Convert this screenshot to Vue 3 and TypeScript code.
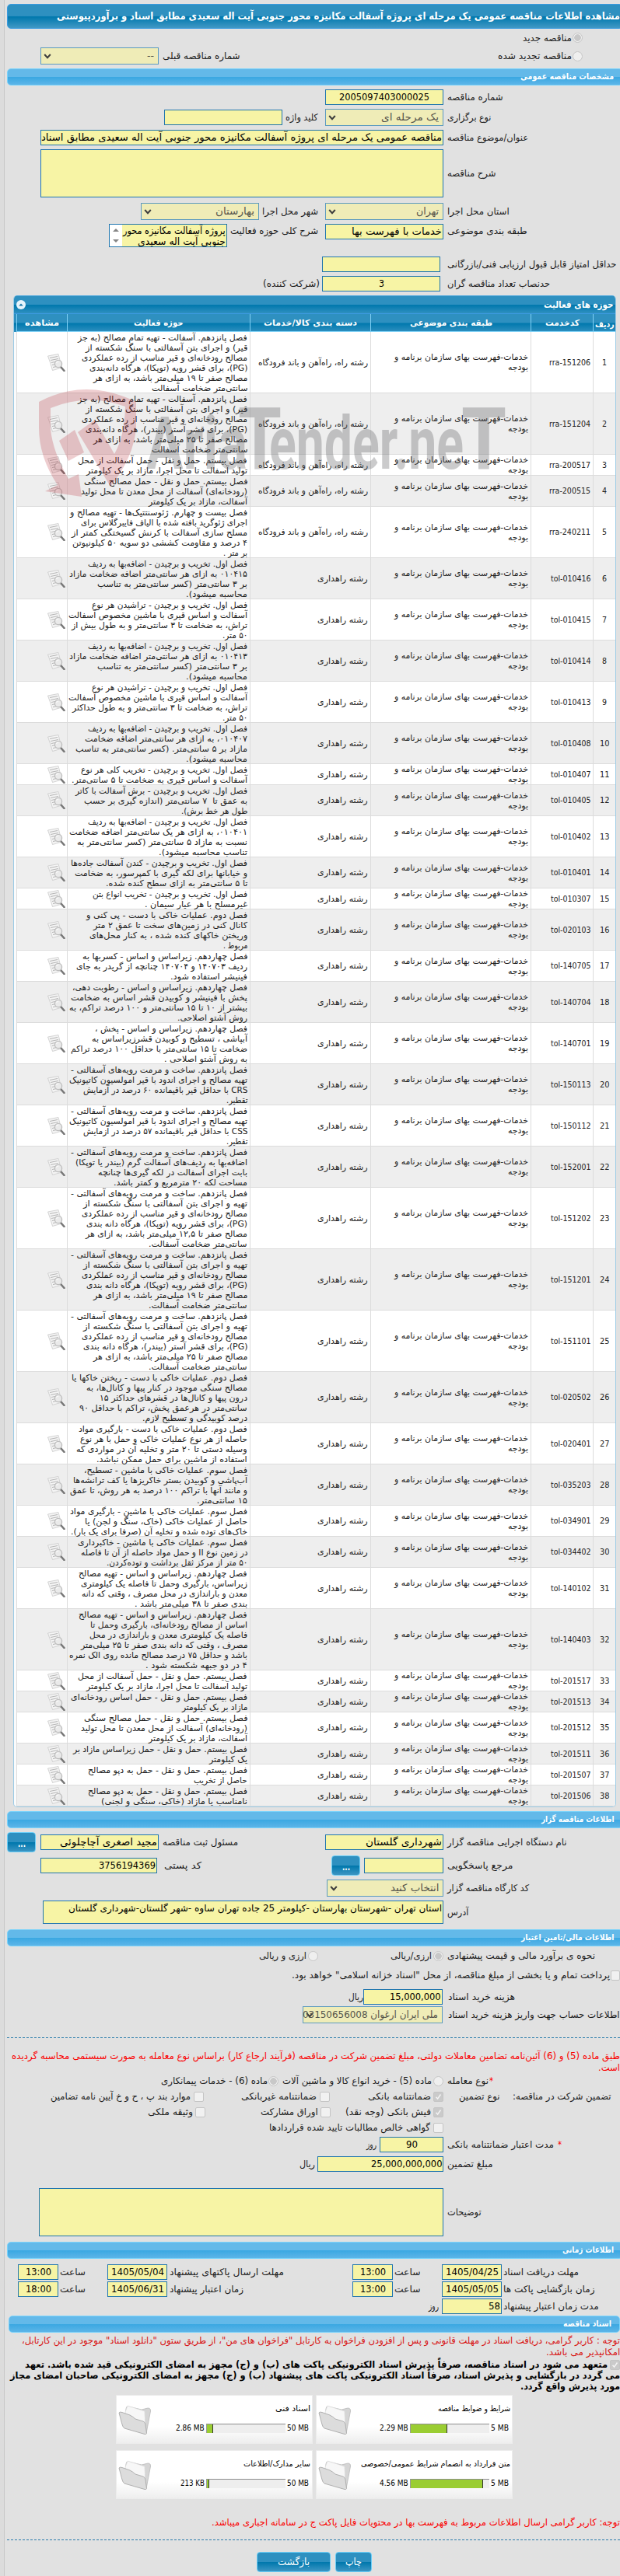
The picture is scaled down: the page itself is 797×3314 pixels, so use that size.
<script setup lang="ts">
type Kind = 'label' | 'input' | 'select' | 'area' | 'scroll' | 'radio' | 'radioOn' | 'check' | 'checkOn' | 'btn' | 'star'
type Align = 'start' | 'center'
interface Item { kind: Kind; gap: number; w: number; lines: [string, number][]; align: Align }
interface Row { mt: number; h: number; top: boolean; items: Item[] }
type Raw = [Kind, number, number, string?, number?, Align?]

// Squeezes a line of text horizontally so that it takes exactly the given width.
const vFit = {
  mounted(el: HTMLElement, binding: { value: number }) {
    el.style.width = 'auto'
    const natural = el.getBoundingClientRect().width
    el.style.width = binding.value + 'px'
    if (natural > 0) el.style.transform = `scaleX(${binding.value / natural})`
  },
}

const PAGE = 797

// Each raw item is [kind, right edge, width, text, text width, alignment], listed from right to left.
function row(mt: number, h: number, raws: Raw[], top = false): Row {
  let edge = PAGE
  const items = raws.map(([kind, right, w, text, tw, align]): Item => {
    const gap = edge - right
    edge = right - w
    return { kind, gap, w, lines: text ? [[text, tw ?? w]] : [], align: align ?? 'start' }
  })
  return { mt, h, top, items }
}

const typeRows: Row[] = [
  row(5, 13, [['radioOn', 749, 13], ['label', 734.6, 63, 'مناقصه جدید']]),
  row(6, 22, [['radio', 749, 13], ['label', 734.6, 95, 'مناقصه تجدید شده'], ['label', 308.6, 99.6, 'شماره مناقصه قبلی'], ['select', 204, 152, '--', 9]]),
]

const summaryRow = row(5, 30, [
  ['label', 677.7, 102.7, 'طبقه بندی موضوعی'],
  ['input', 570, 152, 'خدمات با فهرست بها', 116],
  ['label', 408.7, 113, 'شرح کلی حوزه فعالیت'],
  ['scroll', 292, 152],
], true)
summaryRow.items[3].lines = [['پروژه آسفالت مکانیزه محور', 131.7], ['جنوبی آیت اله سعیدی', 113]]

const generalRows: Row[] = [
  row(5, 20, [['label', 646.7, 71.7, 'شماره مناقصه'], ['input', 570, 152, '2005097403000025', 116, 'center']]),
  row(5, 22, [['label', 631.4, 56.4, 'نوع برگزاری'], ['select', 570, 152, 'یک مرحله ای', 74], ['label', 408.7, 41.7, 'کلید واژه'], ['input', 363, 152]]),
  row(5, 20, [['label', 679, 104, 'عنوان/موضوع مناقصه'], ['input', 570, 518, 'مناقصه عمومی یک مرحله ای پروژه آسفالت مکانیزه محور جنوبی آیت اله سعیدی مطابق اسناد', 515]]),
  row(5, 62, [['label', 637.5, 62.5, 'شرح مناقصه'], ['area', 570, 518]]),
  row(7, 22, [['label', 654.8, 79.8, 'استان محل اجرا'], ['select', 570, 152, 'تهران', 29], ['label', 408.7, 72, 'شهر محل اجرا'], ['select', 333, 152, 'بهارستان', 50]]),
  summaryRow,
  row(12, 20, [['label', 792.6, 217.6, 'حداقل امتیاز قابل قبول ارزیابی فنی/بازرگانی'], ['input', 566, 152]]),
  row(5, 20, [['label', 707, 132, 'حدنصاب تعداد مناقصه گران'], ['input', 566, 152, '3', 7, 'center'], ['label', 410.8, 73, '(شرکت کننده)']]),
]

const ownerRows: Row[] = [
  row(5, 26, [['label', 728.5, 153.5, 'نام دستگاه اجرایی مناقصه گزار'], ['input', 570, 152, 'شهرداری گلستان', 98], ['label', 306, 97, 'مسئول ثبت مناقصه'], ['input', 204, 152, 'مجید اصغری آچاچلوئی', 125], ['btn', 46, 37, '...', 10]]),
  row(4, 26, [['label', 659.4, 84.4, 'مرجع پاسخگویی'], ['input', 570, 102], ['btn', 463, 37, '...', 10], ['label', 258.8, 48, 'کد پستی'], ['input', 202, 150, '3756194369', 73]]),
  row(5, 22, [['label', 680, 105, 'کد کارگاه مناقصه گزار'], ['select', 570, 150, 'انتخاب کنید', 62.5]]),
  row(5, 30, [['label', 602.4, 27.4, 'آدرس'], ['area', 570, 515, 'استان تهران -شهرستان بهارستان -کیلومتر 25 جاده تهران ساوه -شهر گلستان-شهرداری گلستان', 480]]),
]

const financeRows: Row[] = [
  row(4, 16, [['label', 765, 190, 'نحوه ی برآورد مالی و قیمت پیشنهادی'], ['radioOn', 570, 13], ['label', 555, 53, 'ارزی/ریالی'], ['radio', 408.5, 13], ['label', 394, 61, 'ارزی و ریالی']]),
  row(9, 16, [['check', 797, 12.5], ['label', 784, 409, 'پرداخت تمام و یا بخشی از مبلغ مناقصه، از محل "اسناد خزانه اسلامی" خواهد بود.']]),
  row(10, 20, [['label', 662.4, 86, 'هزینه خرید اسناد'], ['input', 569, 102, '15,000,000', 65.6], ['label', 467, 19, 'ریال']]),
  row(2, 22, [['label', 797, 220.6, 'اطلاعات حساب جهت واریز هزینه خرید اسناد'], ['select', 569, 180, 'ملی ایران ارغوان 03150656008', 174]]),
]

const guaranteeRows: Row[] = [
  row(1, 16, [['star', 634, 5, '*'], ['label', 628, 53, 'نوع معامله'], ['radio', 570, 13], ['label', 555, 192, 'ماده (5) - خرید انواع کالا و ماشین آلات'], ['radioOn', 358, 13], ['label', 343.7, 137, 'ماده (6) - خدمات پیمانکاری']]),
  row(2, 20, [['label', 785.5, 126.5, 'تضمین شرکت در مناقصه:'], ['label', 642.6, 52.4, 'نوع تضمین'], ['checkOn', 570, 13], ['label', 553.6, 81, 'ضمانتنامه بانکی'], ['check', 424, 13], ['label', 407, 97, 'ضمانتنامه غیربانکی'], ['check', 262, 13], ['label', 244.5, 180, 'موارد بند پ ، ح و خ آیین نامه تضامین']]),
  row(0, 20, [['checkOn', 570, 13], ['label', 553.6, 110, 'فیش بانکی (وجه نقد)'], ['check', 425, 13], ['label', 408.7, 73.7, 'اوراق مشارکت'], ['check', 264, 13], ['label', 247.6, 58, 'وثیقه ملکی']]),
  row(0, 20, [['check', 570, 13], ['label', 552.6, 207, 'گواهی خالص مطالبات تایید شده قراردادها']]),
  row(2, 20, [['star', 722, 5, '*'], ['label', 712, 137, 'مدت اعتبار ضمانتنامه بانکی'], ['input', 570, 82, '90', 15, 'center'], ['label', 484, 13, 'روز']]),
  row(5, 20, [['label', 633.5, 58.5, 'مبلغ تضمین'], ['input', 570, 162, '25,000,000,000', 91.5], ['label', 404.7, 20, 'ریال']]),
  row(21, 62, [['label', 618.7, 43.7, 'توضیحات'], ['area', 570, 520]]),
]

const timeRows: Row[] = [
  row(7, 20, [['label', 744, 97, 'مهلت دریافت اسناد'], ['input', 645, 77, '1405/04/25', 68, 'center'], ['label', 540.5, 33.5, 'ساعت'], ['input', 505, 52, '13:00', 33, 'center'], ['label', 364.5, 147, 'مهلت ارسال پاکتهای پیشنهاد'], ['input', 215, 77, '1405/05/04', 68, 'center'], ['label', 110, 33, 'ساعت'], ['input', 75, 52, '13:00', 33, 'center']]),
  row(2, 20, [['label', 764.6, 117.6, 'زمان بازگشایی پاکت ها'], ['input', 645, 77, '1405/05/05', 68, 'center'], ['label', 540.5, 33.5, 'ساعت'], ['input', 505, 52, '13:00', 33, 'center'], ['label', 312.7, 95, 'زمان اعتبار پیشنهاد'], ['input', 215, 77, '1405/06/31', 68, 'center'], ['label', 110, 33, 'ساعت'], ['input', 75, 52, '18:00', 33, 'center']]),
  row(2, 20, [['label', 769.7, 122.7, 'مدت زمان اعتبار پیشنهاد'], ['input', 645, 77, '58', 15], ['label', 564.3, 13, 'روز']]),
]

interface Block { title: string; w: number; mt: number; rows: Row[]; note?: boolean }
const lowerBlocks: Block[] = [
  { title: 'اطلاعات مناقصه گزار', w: 93.5, mt: 5, rows: ownerRows },
  { title: 'اطلاعات مالی/تامین اعتبار', w: 119.5, mt: 7, rows: financeRows, note: true },
  { title: 'اطلاعات زمانی', w: 66, mt: 7, rows: timeRows },
]

type Line = [string, number]
const ASF1: Line = ['فصل پانزدهم. آسفالت - تهیه تمام مصالح (به جز', 217.6]
const PAVE: Line = ['فصل پانزدهم. ساخت و مرمت رویه‌های آسفالتی -', 227]
const ADD: Line = ['فصل اول. تخریب و برچیدن - اضافه‌بها به ردیف', 205]
const ROADMIX: Line[] = [['تهیه و اجرای بتن آسفالتی با سنگ شکسته از', 211], ['مصالح رودخانه‌ای و قیر مناسب از رده عملکردی', 213]]
const MIX: Line[] = [['قیر) و اجرای بتن آسفالتی با سنگ شکسته از', 208.4], ['مصالح رودخانه‌ای و قیر مناسب از رده عملکردی', 213]]
const SHAVE: Line[] = [['فصل اول. تخریب و برچیدن - تراشیدن هر نوع', 200], ['آسفالت و اساس قیری با ماشین مخصوص آسفالت', 230]]
const RATIO: Line[] = [['بر ۳ سانتی‌متر (کسر سانتی‌متر به تناسب', 193], ['محاسبه میشود).', 79]]
const HAUL: Line[] = [['فصل بیستم. حمل و نقل - حمل آسفالت از محل', 217.6], ['تولید آسفالت تا محل اجرا، مازاد بر یک کیلومتر', 207]]
const STONE: Line[] = [['فصل بیستم. حمل و نقل - حمل مصالح سنگی', 210.5], ['(رودخانه‌ای) آسفالت از محل معدن تا محل تولید', 214], ['آسفالت، مازاد بر یک کیلومتر', 127]]

const activities: { code: string; lines: Line[] }[] = [
  { code: 'rra-151206', lines: [ASF1, ...MIX, ['(PG)، برای قشر رویه (توپکا)، هرگاه دانه‌بندی', 203.4], ['مصالح صفر تا ۱۹ میلی‌متر باشد، به ازای هر', 198.3], ['سانتی‌متر ضخامت آسفالت', 123.5]] },
  { code: 'rra-151204', lines: [ASF1, ...MIX, ['(PG)، برای قشر آستر (بیندر)، هرگاه دانه‌بندی', 208], ['مصالح صفر تا ۲۵ میلی‌متر باشد، به ازای هر', 198.3], ['سانتی‌متر ضخامت آسفالت', 123.5]] },
  { code: 'rra-200517', lines: HAUL },
  { code: 'rra-200515', lines: STONE },
  { code: 'rra-240211', lines: [['فصل بیست و چهارم. ژئوسنتتیک‌ها - تهیه مصالح و', 228], ['اجرای ژئوگرید بافته شده با الیاف فایبرگلاس برای', 214], ['مسلح سازی آسفالت با کرنش گسیختگی کمتر از', 226], ['۴ درصد و مقاومت کششی دو سویه ۵۰ کیلونیوتن', 225], ['بر متر .', 31]] },
  { code: 'tol-010416', lines: [ADD, ['۰۱۰۴۱۵ به ازای هر سانتی‌متر اضافه ضخامت مازاد', 229], ...RATIO] },
  { code: 'tol-010415', lines: [...SHAVE, ['تراش، به ضخامت تا ۳ سانتی‌متر و به طول بیش از', 226], ['۵۰ متر.', 32.5]] },
  { code: 'tol-010414', lines: [ADD, ['۰۱۰۴۱۳ به ازای هر سانتی‌متر اضافه ضخامت مازاد', 229], ...RATIO] },
  { code: 'tol-010413', lines: [...SHAVE, ['تراش، به ضخامت تا ۳ سانتی‌متر و به طول حداکثر', 225], ['۵۰ متر.', 32.5]] },
  { code: 'tol-010408', lines: [ADD, ['۰۱۰۴۰۷، به ازای هر سانتی‌متر اضافه ضخامت', 209], ['مازاد بر ۵ سانتی‌متر. (کسر سانتی‌متر به تناسب', 221], ['محاسبه میشود).', 79]] },
  { code: 'tol-010407', lines: [['فصل اول. تخریب و برچیدن - تخریب کلی هر نوع', 214], ['آسفالت و اساس قیری به ضخامت تا ۵ سانتی‌متر.', 226]] },
  { code: 'tol-010405', lines: [['فصل اول. تخریب و برچیدن - برش آسفالت با کاتر', 221], ['به عمق تا  ۷ سانتی‌متر (اندازه گیری بر حسب', 210], ['طول هر خط برش).', 85.4]] },
  { code: 'tol-010402', lines: [ADD, ['۰۱۰۴۰۱، به ازای هر یک سانتی‌متر اضافه ضخامت', 229], ['نسبت به مازاد ۵ سانتی‌متر (کسر سانتی‌متر به', 219], ['تناسب محاسبه میشود).', 114]] },
  { code: 'tol-010401', lines: [['فصل اول. تخریب و برچیدن - کندن آسفالت جاده‌ها', 227], ['و خیابانها برای لکه گیری با کمپرسور، به ضخامت', 222], ['تا ۵ سانتی‌متر به ازای سطح کنده شده.', 182.5]] },
  { code: 'tol-010307', lines: [['فصل اول. تخریب و برچیدن - تخریب انواع بتن', 199], ['غیرمسلح با هر عیار سیمان .', 132]] },
  { code: 'tol-020103', lines: [['فصل دوم. عملیات خاکی با دست - پی کنی و', 207], ['کانال کنی در زمین‌های سخت تا عمق ۲ متر', 198], ['وریختن خاکهای کنده شده ، به کنار محل‌های', 203.4], ['مربوط .', 31.5]] },
  { code: 'tol-140705', lines: [['فصل چهاردهم. زیراساس و اساس - کسربها به', 212.5], ['ردیف ۱۴۰۷۰۳ و ۱۴۰۷۰۴ چنانچه از گریدر به جای', 220], ['فینیشر استفاده شود.', 99]] },
  { code: 'tol-140704', lines: [['فصل چهاردهم. زیراساس و اساس - رطوبت دهی،', 225], ['پخش با فینیشر و کوبیدن قشر اساس به ضخامت', 227], ['بیشتر از ۱۰ تا ۱۵ سانتی‌متر و ۱۰۰ درصد تراکم، به', 229], ['روش آشتو اصلاحی.', 90]] },
  { code: 'tol-140701', lines: [['فصل چهاردهم. زیراساس و اساس - پخش ،', 196], ['آبپاشی ، تسطیح و کوبیدن قشرزیراساس به', 200], ['ضخامت تا ۱۵ سانتی‌متر با حداقل ۱۰۰ درصد تراکم', 227], ['به روش آشتو اصلاحی .', 107]] },
  { code: 'tol-150113', lines: [PAVE, ['تهیه مصالح و اجرای اندود با قیر امولسیون کاتیونیک', 229], ['CRS با حداقل قیر باقیمانده ۶۰ درصد در آزمایش', 211.5], ['تقطیر.', 27.5]] },
  { code: 'tol-150112', lines: [PAVE, ['تهیه مصالح و اجرای اندود با قیر امولسیون کاتیونیک', 229], ['CSS با حداقل قیر باقیمانده ۵۷ درصد در آزمایش', 211.5], ['تقطیر.', 27.5]] },
  { code: 'tol-152001', lines: [PAVE, ['اضافه‌بها به ردیف‌های آسفالت گرم (بیندر یا توپکا)', 221], ['بابت اجرای آسفالت در لکه گیری‌ها چنانچه', 192], ['مساحت لکه ۲۰ مترمربع و کمتر باشد.', 172]] },
  { code: 'tol-151202', lines: [PAVE, ...ROADMIX, ['(PG)، برای قشر رویه (توپکا)، هرگاه دانه بندی', 207], ['مصالح صفر تا ۱۲,۵ میلی‌متر باشد، به ازای هر', 208], ['سانتی‌متر ضخامت آسفالت.', 126.6]] },
  { code: 'tol-151201', lines: [PAVE, ...ROADMIX, ['(PG)، برای قشر رویه (توپکا)، هرگاه دانه بندی', 207], ['مصالح صفر تا ۱۹ میلی‌متر باشد، به ازای هر', 198.3], ['سانتی‌متر ضخامت آسفالت.', 126.6]] },
  { code: 'tol-151101', lines: [PAVE, ...ROADMIX, ['(PG)، برای قشر آستر (بیندر)، هرگاه دانه بندی', 211.5], ['مصالح صفر تا ۲۵ میلی‌متر باشد، به ازای هر', 198.3], ['سانتی‌متر ضخامت آسفالت.', 126.6]] },
  { code: 'tol-020502', lines: [['فصل دوم. عملیات خاکی با دست - ریختن خاکها یا', 226], ['مصالح سنگی موجود در کنار پیها و کانال‌ها، به', 207], ['درون پیها و کانال‌ها در قشرهای حداکثر ۱۵', 190], ['سانتی‌متر در هرعمق پخش، تراکم با حداقل ۹۰', 215.6], ['درصد کوبیدگی و تسطیح لازم.', 135]] },
  { code: 'tol-020401', lines: [['فصل دوم. عملیات خاکی با دست - بارگیری مواد', 216.6], ['حاصله از هر نوع عملیات خاکی و حمل با هر نوع', 215], ['وسیله دستی تا ۲۰ متر و تخلیه آن در مواردی که', 219.6], ['استفاده از ماشین برای حمل ممکن نباشد.', 193.7]] },
  { code: 'tol-035203', lines: [['فصل سوم. عملیات خاکی با ماشین - تسطیح،', 210], ['آب‌پاشی و کوبیدن بستر خاکریزها یا کف ترانشه‌ها', 224], ['و مانند آنها با تراکم ۱۰۰ درصد به هر روش، تا عمق', 228], ['۱۵ سانتی‌متر.', 65]] },
  { code: 'tol-034901', lines: [['فصل سوم. عملیات خاکی با ماشین - بارگیری مواد', 228], ['حاصل از عملیات خاکی (خاک، سنگ و لجن) یا', 209], ['خاک‌های توده شده و تخلیه آن (صرفا برای یک بار).', 227]] },
  { code: 'tol-034402', lines: [['فصل سوم. عملیات خاکی با ماشین - خاکبرداری', 218], ['در زمین نوع II و حمل مواد حاصله از آن تا فاصله', 214.5], ['۵۰ متر از مرکز ثقل برداشت و توده‌کردن.', 181.5]] },
  { code: 'tol-140102', lines: [['فصل چهاردهم. زیراساس و اساس - تهیه مصالح', 216.6], ['زیراساس، بارگیری وحمل تا فاصله یک کیلومتری', 214], ['معدن و باراندازی در محل مصرف ، وقتی که دانه', 213], ['بندی صفر تا ۳۸ میلی‌متر باشد .', 145]] },
  { code: 'tol-140403', lines: [['فصل چهاردهم. زیراساس و اساس - تهیه مصالح', 216.6], ['اساس از مصالح رودخانه‌ای، بارگیری وحمل تا', 202], ['فاصله یک کیلومتری معدن و باراندازی در محل', 203], ['مصرف ، وقتی که دانه بندی صفر تا ۲۵ میلی‌متر', 214.5], ['باشد و حداقل ۷۵ درصد مصالح مانده روی الک نمره', 229], ['۴ در دو جبهه شکسته شود .', 130.7]] },
  { code: 'tol-201517', lines: HAUL },
  { code: 'tol-201513', lines: [['فصل بیستم. حمل و نقل - حمل اساس رودخانه‌ای', 227], ['مازاد بر یک کیلومتر', 84.4]] },
  { code: 'tol-201512', lines: STONE },
  { code: 'tol-201511', lines: [['فصل بیستم. حمل و نقل - حمل زیراساس مازاد بر', 224], ['یک کیلومتر', 49]] },
  { code: 'tol-201507', lines: [['فصل بیستم. حمل و نقل - حمل به دپو مصالح', 205], ['حاصل از تخریب', 68.6]] },
  { code: 'tol-201506', lines: [['فصل بیستم. حمل و نقل - حمل به دپو مصالح', 205], ['نامناسب یا مازاد (خاکی، سنگی و لجنی)', 188]] },
]

const heads: Line[] = [['ردیف', 24.5], ['کدخدمت', 44], ['طبقه بندی موضوعی', 106], ['دسته بندی کالا/خدمات', 120], ['حوزه فعالیت', 63.5], ['مشاهده', 44]]

const docs = [
  { title: 'شرایط و ضوابط مناقصه', w: 93, max: '5 MB', mw: 23, used: '2.29 MB', uw: 36.6, pct: 46.5 },
  { title: 'اسناد فنی', w: 45, max: '50 MB', mw: 28, used: '2.86 MB', uw: 36.6, pct: 7.5 },
  { title: 'متن قرارداد به انضمام شرایط عمومی/خصوصی', w: 192, max: '5 MB', mw: 23, used: '4.56 MB', uw: 36.6, pct: 92.5 },
  { title: 'سایر مدارک/اطلاعات', w: 86, max: '50 MB', mw: 28, used: '213 KB', uw: 31, pct: 2.5 },
]

const blocksBefore: Block[] = [{ title: 'مشخصات مناقصه عمومی', w: 120, mt: 5, rows: generalRows }]
const stages: { id: string; blocks: Block[] }[] = [
  { id: 'general', blocks: blocksBefore },
  { id: 'lower', blocks: lowerBlocks },
]
const guaranteeBlock = guaranteeRows

function rowsOf(b: Block): Row[] {
  return b.rows
}
</script>

<template>
  <div class="page">
    <h1 class="title"><span v-fit="724" class="fit">مشاهده اطلاعات مناقصه عمومی یک مرحله ای پروژه آسفالت مکانیزه محور جنوبی آیت اله سعیدی مطابق اسناد و برآوردپیوستی</span></h1>

    <div v-for="(r, i) in typeRows" :key="'t' + i" class="row" :style="{ marginTop: r.mt + 'px', height: r.h + 'px' }">
      <div v-for="(it, j) in r.items" :key="j" :class="['item', it.kind, it.align]" :style="{ marginRight: it.gap + 'px', width: it.w + 'px' }">
        <svg v-if="it.kind === 'select'" class="chev" viewBox="0 0 10 7"><path d="M1.2 1 5 5.2 8.8 1" /></svg>
        <span v-for="l in it.lines" :key="l[0]" v-fit="l[1]" class="fit">{{ l[0] }}</span>
      </div>
    </div>

    <template v-for="stage in stages" :key="stage.id">
      <template v-for="b in stage.blocks" :key="b.title">
        <h2 class="section" :style="{ marginTop: b.mt + 'px' }"><span v-fit="b.w" class="fit">{{ b.title }}</span></h2>
        <div v-for="(r, i) in rowsOf(b)" :key="i" :class="['row', { top: r.top }]" :style="{ marginTop: r.mt + 'px', height: r.h + 'px' }">
          <div v-for="(it, j) in r.items" :key="j" :class="['item', it.kind, it.align]" :style="{ marginRight: it.gap + 'px', width: it.w + 'px' }">
            <svg v-if="it.kind === 'select'" class="chev" viewBox="0 0 10 7"><path d="M1.2 1 5 5.2 8.8 1" /></svg>
            <span v-for="l in it.lines" :key="l[0]" v-fit="l[1]" class="fit">{{ l[0] }}</span>
            <svg v-if="it.kind === 'scroll'" class="bar" viewBox="0 0 16 28"><rect width="16" height="28" fill="#fff" /><path d="M4 9 8 5l4 4zM4 19l4 4 4-4z" fill="#858585" /></svg>
          </div>
        </div>

        <template v-if="b.note">
          <div class="dash far"></div>
          <p class="notice red">
            <span v-fit="782" class="fit">طبق ماده (5) و (6) آئین‌نامه تضامین معاملات دولتی، مبلغ تضمین شرکت در مناقصه (فرآیند ارجاع کار) براساس نوع معامله به صورت سیستمی محاسبه گردیده</span>
            <span v-fit="28" class="fit">است.</span>
          </p>
          <div v-for="(r, i) in guaranteeBlock" :key="'g' + i" class="row" :style="{ marginTop: r.mt + 'px', height: r.h + 'px' }">
            <div v-for="(it, j) in r.items" :key="j" :class="['item', it.kind, it.align]" :style="{ marginRight: it.gap + 'px', width: it.w + 'px' }">
              <svg v-if="it.kind === 'checkOn'" class="tick" viewBox="0 0 13 13"><path d="M3 6.8 5.4 9.6 10 3" /></svg>
              <span v-for="l in it.lines" :key="l[0]" v-fit="l[1]" class="fit">{{ l[0] }}</span>
            </div>
          </div>
        </template>
      </template>

      <div v-if="stage.id === 'general'" class="table">
        <div class="table-title">
          <span v-fit="89.5" class="fit">حوزه های فعالیت</span>
          <svg class="toggle" viewBox="0 0 12 12"><circle cx="6" cy="6" r="6" fill="#e6f4fc" /><path d="M3.2 7.6 6 4.6l2.8 3z" fill="#1676a8" /></svg>
        </div>
        <div class="tr head">
          <div v-for="h in heads" :key="h[0]" class="th"><span v-fit="h[1]" class="fit">{{ h[0] }}</span></div>
        </div>
        <div v-for="(a, i) in activities" :key="a.code" class="tr">
          <div class="td num"><span v-fit="i < 9 ? 6 : 12.5" class="fit">{{ i + 1 }}</span></div>
          <div class="td"><span v-fit="i < 5 ? 53 : 51.5" class="fit">{{ a.code }}</span></div>
          <div class="td"><span v-fit="172" class="fit">خدمات-فهرست بهای سازمان برنامه و</span><span v-fit="26" class="fit">بودجه</span></div>
          <div class="td"><span v-if="i < 5" v-fit="141" class="fit">رشته راه، راه‌آهن و باند فرودگاه</span><span v-else v-fit="64.6" class="fit">رشته راهداری</span></div>
          <div class="td"><span v-for="(l, k) in a.lines" :key="k" v-fit="l[1]" class="fit">{{ l[0] }}</span></div>
          <div class="td view">
            <svg class="lens" viewBox="0 0 23 23">
              <path d="M.5 3 14 .5 18.500 18 6.500 21.500Q4 12 .5 3Z" fill="#f4f4f4" stroke="#c9c9c9" stroke-width=".8" />
              <path d="M3 5.500 13 3.500M4 8.500 14 6.500M5 11.500l6-1.200M6 14.500l4-.8M7 17.500l4-.8" stroke="#b4b4b4" stroke-width="1" />
              <path d="m17.500 17.500 4 4.500" stroke="#777" stroke-width="2.600" stroke-linecap="round" />
              <circle cx="14" cy="13" r="4.600" fill="#e9e9e9" fill-opacity=".9" stroke="#bdbdbd" stroke-width="1.300" />
              <path d="M11.500 12q.8-2 2.800-2" stroke="#fff" fill="none" />
            </svg>
          </div>
        </div>
        <svg class="watermark" viewBox="0 0 610 145">
          <g fill="#b71f2b" opacity=".22">
            <path d="M0 17Q60-15 125 17V50Q122 88 92 126L50 56 72 40 97 84Q110 62 111 23Q63 5 15 25V52Q18 82 38 116L51 110 55 139 8 132 24 124Q0 88 0 50Z" />
            <path d="M26 67 46 53 58 82 38 93Z" />
          </g>
          <g fill="#55565a" opacity=".3">
            <text x="138" y="103" font-size="95" textLength="130" lengthAdjust="spacingAndGlyphs">Aria</text>
            <text x="256" y="103" font-size="112" textLength="56" lengthAdjust="spacingAndGlyphs">T</text>
            <text x="296" y="103" font-size="95" textLength="250" lengthAdjust="spacingAndGlyphs">ender.ne</text>
            <text x="543" y="103" font-size="112" textLength="58" lengthAdjust="spacingAndGlyphs">T</text>
          </g>
        </svg>
      </div>
    </template>

    <h2 class="section docs-head"><span v-fit="62" class="fit">اسناد مناقصه</span></h2>
    <p class="notice dark">
      <span v-fit="769" class="fit">توجه : کاربر گرامی، دریافت اسناد در مهلت قانونی و پس از افزودن فراخوان به کارتابل "فراخوان های من"، از طریق ستون "دانلود اسناد" موجود در این کارتابل،</span>
      <span v-fit="95.5" class="fit">امکانپذیر می باشد.</span>
    </p>
    <div class="pledge">
      <div class="first">
        <div class="item checkOn"><svg class="tick" viewBox="0 0 13 13"><path d="M3 6.800 5.400 9.600 10 3" /></svg></div>
        <span v-fit="749" class="fit">متعهد می شود در اسناد مناقصه، صرفاً پذیرش اسناد الکترونیکی پاکت های (ب) و (ج) مجهز به امضای الکترونیکی قید شده باشد. تعهد</span>
      </div>
      <span v-fit="784" class="fit">می گردد در بازگشایی و پذیرش اسناد، صرفاً اسناد الکترونیکی پاکت های پیشنهاد (ب) و (ج) مجهز به امضای الکترونیکی صاحبان امضای مجاز</span>
      <span v-fit="128" class="fit">مورد پذیرش واقع گردد.</span>
    </div>

    <div class="cards">
      <div v-for="d in docs" :key="d.title" class="card">
        <div class="card-title"><span v-fit="d.w" class="fit">{{ d.title }}</span></div>
        <div class="usage">
          <span v-fit="d.mw" class="fit" dir="ltr">{{ d.max }}</span>
          <div class="meter"><div class="fill" :style="{ width: d.pct + '%' }"></div></div>
          <span v-fit="d.uw" class="fit" dir="ltr">{{ d.used }}</span>
        </div>
        <svg class="folder" viewBox="0 0 42 40">
          <path d="M10 5Q10 1.500 13 2l17 4 8-2q4 0 3.500 4L36 36.500 8 24Z" fill="#d5d5d5" stroke="#b9b9b9" stroke-width=".8" />
          <path d="M9 9 12 1l22 7 1 22-24-8Z" fill="#f7f7f7" stroke="#d8d8d8" stroke-width=".7" />
          <path d="M1 10Q2 8.500 5 9.500L15 13q4 2 7 5l10 3q2.500 1 3 4l1.500 11.500Q36 38 34 37.500L8 30Q6 29 5 25Z" fill="#dcdcdc" stroke="#a9a9a9" stroke-width=".9" />
        </svg>
      </div>
    </div>

    <p class="notice last red"><span v-fit="525" class="fit">توجه: کاربر گرامی ارسال اطلاعات مربوط به فهرست بها در محتویات فایل پاکت ج در سامانه اجباری میباشد.</span></p>
    <div class="dash near"></div>
    <div class="actions">
      <button class="btn print" type="button"><span v-fit="21" class="fit">چاپ</span></button>
      <button class="btn back" type="button"><span v-fit="41" class="fit">بازگشت</span></button>
    </div>
  </div>
</template>

<style>
body { margin: 0; background: #e1e1e1; }
</style>

<style scoped>
.page { box-sizing: border-box; width: 797px; height: 3314px; padding-top: 5px; overflow: hidden; direction: rtl; background: linear-gradient(90deg, #dcdcdc 5px, #c6c6c6 5px 6px, #e1e1e1 6px); font: 12px/14px "DejaVu Sans", sans-serif; color: #1c1c1c; position: relative; }
.fit { display: inline-block; flex: none; white-space: pre; transform-origin: 100% 50%; text-align: right; }
.fit[dir="ltr"] { transform-origin: 0 50%; text-align: left; }
.title { box-sizing: border-box; height: 32px; margin: 0 -4px 0 9px; padding-right: 3px; display: flex; align-items: center; border: 1px solid #3a9be0; border-radius: 5px; background: linear-gradient(#2e90c0 0 48%, #0078ad 52%, #4098c5); color: #fff; font-size: 13px; font-weight: bold; }
.section { box-sizing: border-box; height: 22px; margin: 0 -4px 0 9px; padding-right: 11px; display: flex; align-items: center; border: 1px solid #7ad3fb; border-radius: 5px; background: linear-gradient(#63b9e9 0 48%, #3ba8e2 52%, #5cb5e8); color: #fff; font-size: 11px; font-weight: bold; }
.row { display: flex; align-items: center; }
.row.top { align-items: flex-start; }
.row.top .label { height: 17px; }
.item { box-sizing: border-box; flex: none; display: flex; align-items: center; }
.item.center { justify-content: center; }
.item.label { height: 16px; }
.item.star { color: #f00; font-size: 13px; height: 20px; }
.input, .area, .scroll { border: 1px solid #1f75ae; background: #f7f4a5; padding: 0 1px; color: #000; }
.input { height: 20px; font-size: 13px; }
.input.center { padding: 0; }
.area { align-items: flex-start; height: 100%; padding-top: 2px; }
.scroll { height: 30px; flex-direction: column; align-items: flex-start; padding-top: 1px; font-size: 13px; position: relative; overflow: hidden; }
.bar { position: absolute; left: 0; top: 0; width: 16px; height: 28px; }
.select { height: 22px; border: 1px solid #5b9abf; background: #efecb7; padding-right: 5px; color: #55544c; font-size: 13px; position: relative; }
.chev { position: absolute; left: 3px; top: 7px; width: 10px; height: 7px; fill: none; stroke: #3d3d3d; stroke-width: 2; }
.radio, .radioOn { height: 13px; border: 1px solid #c6c6c6; border-radius: 50%; background: #efefef; }
.radioOn { background: radial-gradient(circle, #c8c8c8 0 4px, #efefef 4.600px); }
.check, .checkOn { height: 13px; border: 1px solid #c4c4c4; border-radius: 2px; background: #f1f1f1; }
.checkOn { width: 13px; background: #cacaca; }
.tick { width: 100%; height: 100%; fill: none; stroke: #f4f4f4; stroke-width: 1.800; }
.btn { box-sizing: border-box; height: 26px; display: flex; align-items: center; justify-content: center; padding: 0; border: 1px solid #69cef8; border-radius: 4px; background: linear-gradient(#2e90c0 0 48%, #0078ad 52%, #3c95c3); color: #fff; font: 13px/14px "DejaVu Sans", sans-serif; }
.item.btn { font-weight: bold; padding-top: 4px; }

.table { position: relative; box-sizing: border-box; margin: 5px 5px 0 17px; border: 1px solid #9ccbe6; border-top: 0; border-radius: 5px; background: #fafbfc; font-size: 11px; line-height: 13px; color: #222; overflow: hidden; }
.table-title { box-sizing: border-box; height: 24px; display: flex; justify-content: space-between; align-items: center; padding: 0 3px 0 3px; border-top: 1px solid #49a5dc; border-bottom: 1px solid #3c9ae0; background: linear-gradient(#2e90c0 0 48%, #0078ad 52%, #2f90c0); color: #fff; font-size: 12px; font-weight: bold; }
.toggle { width: 12px; height: 12px; }
.tr { display: grid; grid-template-columns: 29px 80px 206px 155px 235px 65px; }
.tr:nth-child(even) .td { background: #eee; }
.tr:nth-child(odd) .td { background: #fff; }
.th { box-sizing: border-box; height: 23px; display: flex; align-items: center; justify-content: center; border-left: 1px solid #7fd0f5; border-bottom: 1px solid #7fd0f5; color: #fff; font-weight: bold; }
.th:first-child { padding-top: 4px; }
.tr.head { background: linear-gradient(#2e90c0 0 48%, #0078ad 52%, #2f90c0); }
.td { border-left: 1px solid #dcdcdc; border-bottom: 1px solid #dcdcdc; padding-right: 3px; display: flex; flex-direction: column; justify-content: center; align-items: flex-start; }
.tr .td:nth-child(5) .fit { position: relative; top: 1px; }
.td.num { padding: 0; align-items: center; }
.td.view { padding-right: 2px; }
.lens { width: 23px; height: 23px; }
.watermark { position: absolute; left: 32px; top: 120px; width: 610px; height: 145px; direction: ltr; font-family: Roboto, sans-serif; font-weight: bold; }

.dash { height: 0; margin-left: 9px; border-top: 1px dashed #2a7cab; }
.dash.far { margin-top: 18px; margin-bottom: 16px; }
.dash.near { margin-top: 14px; }
.notice { margin: 0; display: flex; flex-direction: column; align-items: flex-start; line-height: 15px; font-size: 12px; }
.notice.red { color: #fa0000; }
.notice.dark { color: #d81313; margin-top: 3px; }
.notice.last { margin-top: 22px; line-height: 16px; }
.docs-head { margin: 2px 0 0 11px; padding-right: 10px; }
.pledge { margin-top: 1px; line-height: 14px; font-weight: bold; color: #000; display: flex; flex-direction: column; align-items: flex-start; }
.first { display: flex; align-items: center; gap: 3px; height: 14px; }
.cards { display: grid; grid-template-columns: 253px 253px; gap: 8px 4px; margin: 4px 138px 0 0; }
.card { position: relative; box-sizing: border-box; height: 63px; background: linear-gradient(#fff 65%, #eee); border: 1px solid #ececec; padding: 10px 2px 0 0; font-size: 10px; color: #000; }
.card-title { height: 14px; display: flex; }
.usage { display: flex; align-items: center; height: 12px; margin-top: 12px; padding-right: 2px; gap: 2px; }
.meter { box-sizing: border-box; width: 102px; height: 12px; border-top: 1px solid #8d8d8d; border-left: 1px solid #9a9a9a; background: #eee; direction: ltr; }
.fill { box-sizing: border-box; height: 11px; background: #9acd32; border-right: 1px solid #333; }
.folder { position: absolute; left: 2px; top: 12px; width: 42px; height: 40px; }
.actions { display: flex; margin-top: 15px; padding-right: 319.500px; gap: 6px; }
.print { width: 47px; }
.back { width: 95px; }
</style>
